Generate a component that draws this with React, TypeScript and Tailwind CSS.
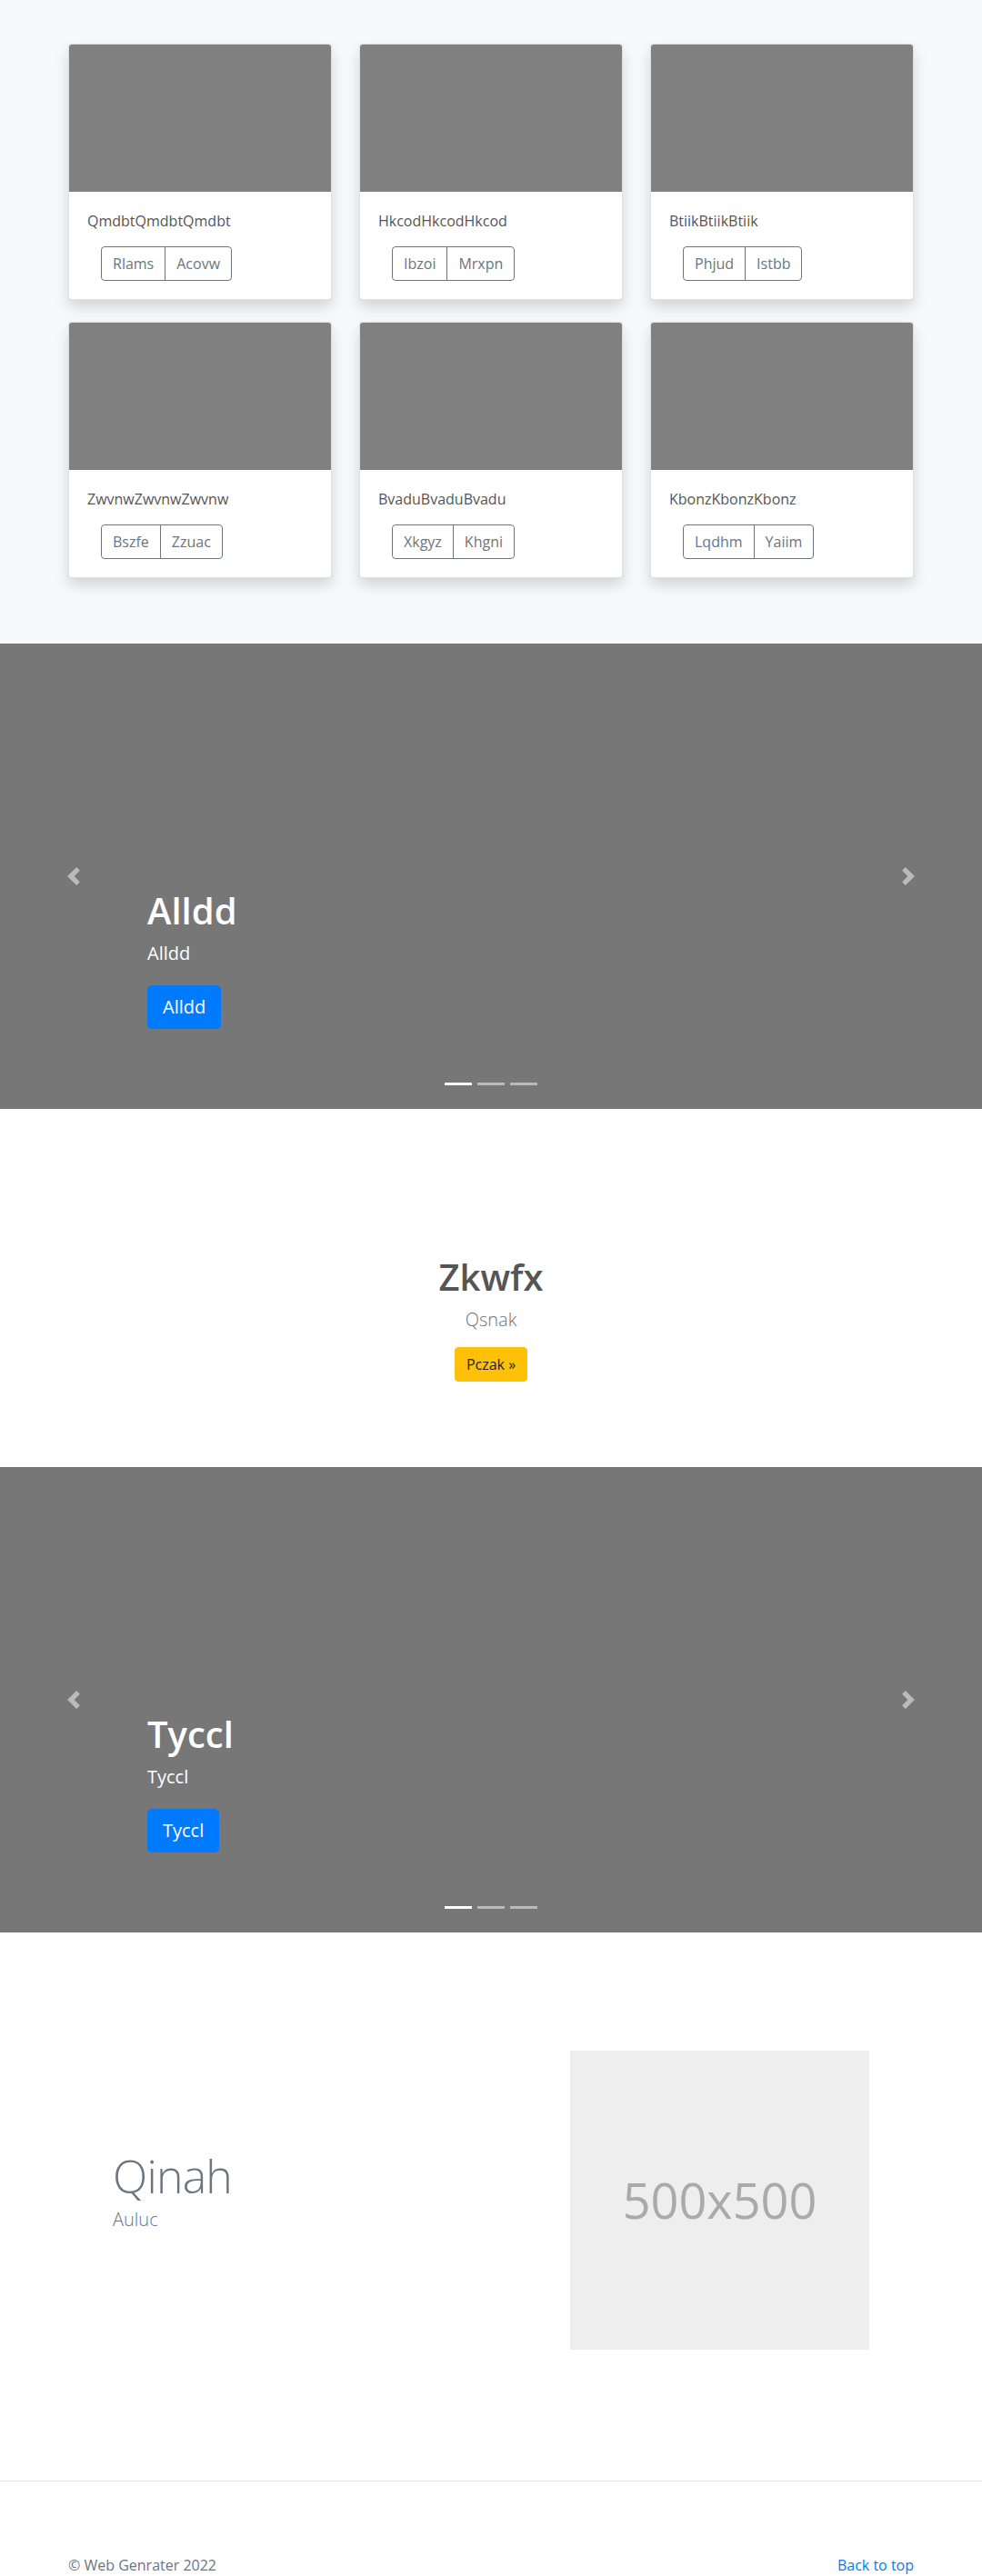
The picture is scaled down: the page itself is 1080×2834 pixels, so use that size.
import React from "react";

interface Album {
  title: string;
  actions: [string, string];
}

const albums: Album[] = [
  { title: "QmdbtQmdbtQmdbt", actions: ["Rlams", "Acovw"] },
  { title: "HkcodHkcodHkcod", actions: ["Ibzoi", "Mrxpn"] },
  { title: "BtiikBtiikBtiik", actions: ["Phjud", "Istbb"] },
  { title: "ZwvnwZwvnwZwvnw", actions: ["Bszfe", "Zzuac"] },
  { title: "BvaduBvaduBvadu", actions: ["Xkgyz", "Khgni"] },
  { title: "KbonzKbonzKbonz", actions: ["Lqdhm", "Yaiim"] },
];

const ChevronLeft = () => (
  <svg width="20" height="20" viewBox="0 0 8 8" fill="#fff" className="opacity-50">
    <path d="M5.25 0l-4 4 4 4 1.5-1.5L4.25 4l2.5-2.5L5.25 0z" />
  </svg>
);

const ChevronRight = () => (
  <svg width="20" height="20" viewBox="0 0 8 8" fill="#fff" className="opacity-50">
    <path d="M2.75 0l-1.5 1.5L3.75 4l-2.5 2.5L2.75 8l4-4-4-4z" />
  </svg>
);

const AlbumCard: React.FC<{ album: Album }> = ({ album }) => (
  <div className="mb-6 bg-white border border-black/[0.125] rounded overflow-hidden shadow-[0_8px_16px_rgba(0,0,0,0.15)]">
    <div className="h-[162px] bg-[#808080]" />
    <div className="p-5">
      <p className="text-base leading-6 text-[#555] mb-4">{album.title}</p>
      <div className="ml-[15px] flex">
        <button className="px-3 py-1.5 text-base leading-6 text-[#6c757d] border border-[#6c757d] rounded-l">
          {album.actions[0]}
        </button>
        <button className="-ml-px px-3 py-1.5 text-base leading-6 text-[#6c757d] border border-[#6c757d] rounded-r">
          {album.actions[1]}
        </button>
      </div>
    </div>
  </div>
);

const Slide: React.FC<{ label: string }> = ({ label }) => (
  <section className="relative h-[512px] bg-[#777] flex flex-col justify-end pl-[162px] pb-[88px]">
    <div className="absolute left-0 top-0 bottom-0 w-[162px] flex items-center justify-center">
      <ChevronLeft />
    </div>
    <div className="absolute right-0 top-0 bottom-0 w-[162px] flex items-center justify-center">
      <ChevronRight />
    </div>
    <h1 className="text-[40px] leading-[48px] font-semibold text-white mb-2">{label}</h1>
    <p className="text-xl leading-[30px] text-white mb-5">{label}</p>
    <div>
      <button className="bg-[#007bff] border border-[#007bff] text-white text-xl leading-[30px] px-4 py-2 rounded-[5px]">
        {label}
      </button>
    </div>
    <div className="absolute left-0 right-0 bottom-[26px] flex justify-center gap-[6px]">
      <span className="w-[30px] h-[3px] bg-white" />
      <span className="w-[30px] h-[3px] bg-white/50" />
      <span className="w-[30px] h-[3px] bg-white/50" />
    </div>
  </section>
);

export default function App() {
  return (
    <div className="font-['Open_Sans',sans-serif] bg-white">
      <section className="bg-[#f8f9fa] py-12">
        <div className="w-[930px] mx-auto grid grid-cols-3 gap-x-[30px]">
          {albums.map((a) => (
            <AlbumCard key={a.title} album={a} />
          ))}
        </div>
      </section>

      <Slide label="Alldd" />

      <section className="pt-[161px] pb-[94px] text-center">
        <h1 className="text-[40px] leading-[48px] font-semibold text-[#555] mb-2">Zkwfx</h1>
        <p className="text-xl leading-[30px] font-light text-[#6c757d] mb-[15px]">Qsnak</p>
        <button className="bg-[#ffc107] border border-[#ffc107] text-[#212529] text-base leading-6 px-3 py-1.5 rounded">
          Pczak »
        </button>
      </section>

      <Slide label="Tyccl" />

      <section className="pt-[130px] pb-[144px] flex items-center">
        <div className="w-[627px] pl-[124px]">
          <h2 className="text-[50px] leading-none font-light tracking-[-0.8px] text-[#6c757d] mb-2">Qinah</h2>
          <p className="text-xl leading-[30px] font-light text-[#6c757d] mb-4">Auluc</p>
        </div>
        <div className="w-[329px] h-[329px] bg-[#eeeeee] flex items-center justify-center">
          <span className="text-[54px] text-[#aaaaaa]">500x500</span>
        </div>
      </section>

      <hr className="border-0 border-t border-[#e5e5e5]" />

      <footer className="pt-[80px]">
        <div className="w-[930px] mx-auto flex justify-between text-base leading-6">
          <p className="text-[#6c757d]">© Web Genrater 2022</p>
          <a href="#" className="text-[#007bff]">Back to top</a>
        </div>
      </footer>
    </div>
  );
}
